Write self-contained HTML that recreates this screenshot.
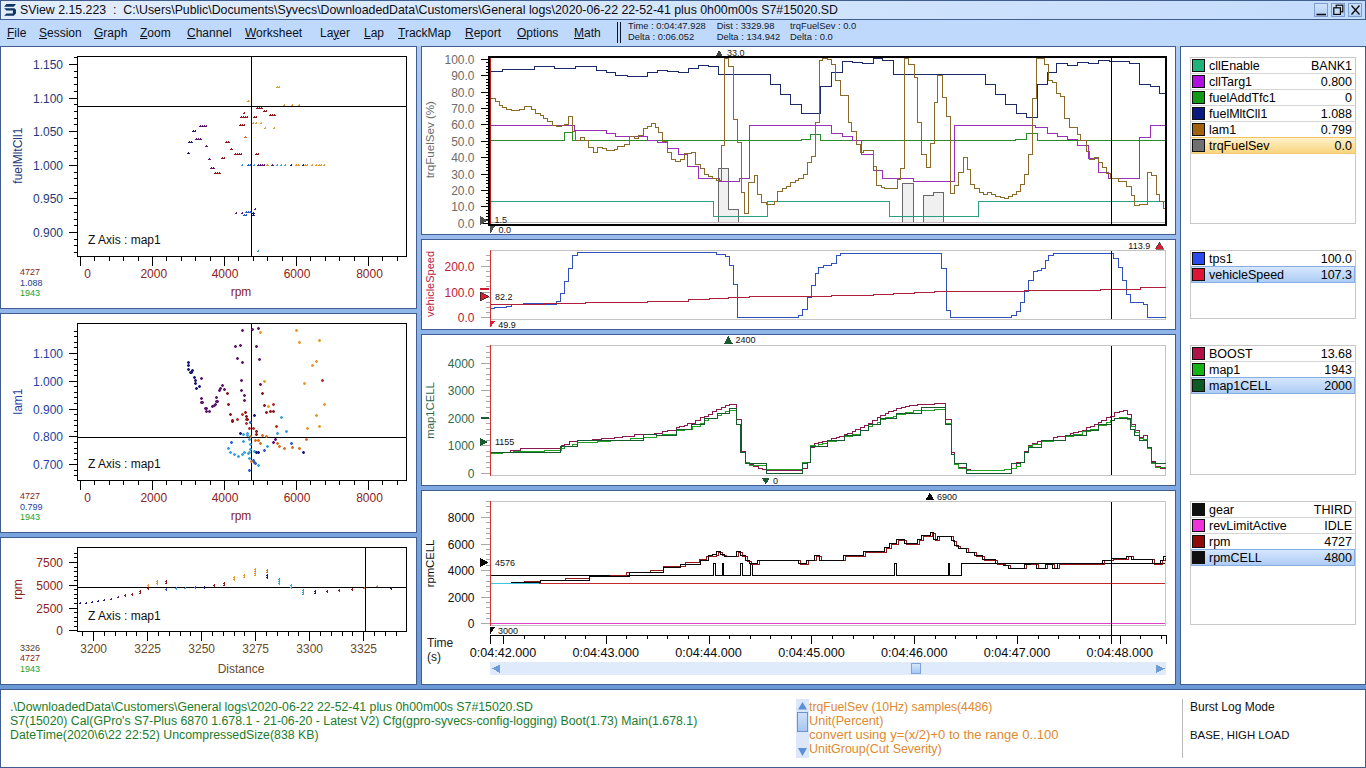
<!DOCTYPE html>
<html><head><meta charset="utf-8">
<style>
*{box-sizing:border-box;margin:0;padding:0}
html,body{width:1366px;height:768px;overflow:hidden}
body{position:relative;font-family:"Liberation Sans",sans-serif;background:linear-gradient(#aecbf2 46px,#8fb4e9 330px,#7fa8e2 490px,#6b97d5 690px);color:#000}
.a{position:absolute;white-space:pre}
.pn{position:absolute;background:#fff;border:1px solid #3f5d8f}
#title{position:absolute;left:0;top:0;width:1366px;height:20px;border:1px solid #3f5d8f;background:linear-gradient(90deg,#e2edfc,#d3e5fd 50%,#c4dcfc)}
#menu{position:absolute;left:0;top:20px;width:1366px;height:26px;background:#bfd9fc}
.mi{position:absolute;top:26px;font-size:12px;color:#0b1120;line-height:14px}
.mi u{text-decoration:underline;text-decoration-thickness:1px;text-underline-offset:0.5px}
.wb{position:absolute;top:3px;width:14px;height:14px;border:1px solid #7d9dcf;background:linear-gradient(#cfe1fa,#b0cff8)}
svg.ov{position:absolute;left:0;top:0}
svg text{font-family:"Liberation Sans",sans-serif}
.lg{position:absolute;left:1190px;width:166px;border:1px solid #c8c8c8;background:#fff}
.row{position:relative;height:16px;border-bottom:1px solid #d4d4d4;font-size:12.5px;line-height:15px;white-space:nowrap}
.row .sw{position:absolute;left:1px;top:1px;width:13px;height:13px;border:1px solid #101010}
.row .n{position:absolute;left:18px;top:1px}
.row .v{position:absolute;right:3px;top:1px}
.row.hy{background:linear-gradient(#fff2cc,#f9d47c);border-bottom-color:#f0c878;box-shadow:0 -1px 0 #f0c468}
.row.hb{background:linear-gradient(#d6e7fd,#adccf5);border-bottom-color:#86ace2;box-shadow:0 -1px 0 #86ace2,inset 1px 0 0 #86ace2,inset -1px 0 0 #86ace2}
.st{position:absolute;font-size:12.3px;white-space:pre;line-height:14px}
</style></head><body>

<div id="title"></div><div id="menu"></div>
<svg class="ov" width="20" height="20"><path d="M4.1 6.73L6.44 4.1H15.96L13.76 6.73Z M4.1 8.2H14.4L15.96 9.8V13.5L13.76 15.81H4.1L6.44 13.47H12.88V10.54H6.44Z" fill="#0f3566"/></svg>
<div class="a" style="left:20px;top:3px;font-size:12.33px;line-height:15px;color:#0c0c14">SView 2.15.223  :  C:\Users\Public\Documents\Syvecs\DownloadedData\Customers\General logs\2020-06-22 22-52-41 plus 0h00m00s S7#15020.SD</div>
<div class="wb" style="left:1314px"></div>
<div class="wb" style="left:1331px"></div>
<div class="wb" style="left:1348px"></div>
<svg class="ov" width="1366" height="20" style="top:0"><path d="M1316.5 14.5H1326" stroke="#0a0a0a" stroke-width="1.6"/><rect x="1336.2" y="5.2" width="6.6" height="6.6" fill="none" stroke="#0a0a0a" stroke-width="1.2"/><rect x="1333.8" y="7.8" width="6.6" height="6.6" fill="#c4dbf9" stroke="#0a0a0a" stroke-width="1.2"/><path d="M1351.5 5.5L1359.5 14.5M1359.5 5.5L1351.5 14.5" stroke="#0a0a0a" stroke-width="1.3"/></svg>
<div class="mi" style="left:7px"><u>F</u>ile</div>
<div class="mi" style="left:39px"><u>S</u>ession</div>
<div class="mi" style="left:94px"><u>G</u>raph</div>
<div class="mi" style="left:140px"><u>Z</u>oom</div>
<div class="mi" style="left:187px"><u>C</u>hannel</div>
<div class="mi" style="left:245px"><u>W</u>orksheet</div>
<div class="mi" style="left:320px">La<u>y</u>er</div>
<div class="mi" style="left:364px"><u>L</u>ap</div>
<div class="mi" style="left:398px"><u>T</u>rackMap</div>
<div class="mi" style="left:465px"><u>R</u>eport</div>
<div class="mi" style="left:517px"><u>O</u>ptions</div>
<div class="mi" style="left:574px"><u>M</u>ath</div>
<svg class="ov" width="1366" height="46"><path d="M617.5 22V43M620.5 22V43" stroke="#101828" stroke-width="1"/><text x="628" y="29" font-size="9.4" fill="#141a2a" text-anchor="start">Time : 0:04:47.928</text><text x="628" y="39.5" font-size="9.4" fill="#141a2a" text-anchor="start">Delta : 0:06.052</text><text x="716.7" y="29" font-size="9.4" fill="#141a2a" text-anchor="start">Dist : 3329.98</text><text x="716.7" y="39.5" font-size="9.4" fill="#141a2a" text-anchor="start">Delta : 134.942</text><text x="790" y="29" font-size="9.4" fill="#141a2a" text-anchor="start">trqFuelSev : 0.0</text><text x="790" y="39.5" font-size="9.4" fill="#141a2a" text-anchor="start">Delta : 0.0</text></svg>
<div class="pn" style="left:0px;top:46px;width:417px;height:263px"></div>
<div class="pn" style="left:0px;top:313px;width:417px;height:220px"></div>
<div class="pn" style="left:0px;top:537px;width:417px;height:148px"></div>
<div class="pn" style="left:421px;top:46px;width:755px;height:189px"></div>
<div class="pn" style="left:421px;top:239px;width:755px;height:91px"></div>
<div class="pn" style="left:421px;top:334px;width:755px;height:152px"></div>
<div class="pn" style="left:421px;top:490px;width:755px;height:195px"></div>
<div class="pn" style="left:1180px;top:46px;width:186px;height:639px"></div>
<div class="pn" style="left:0px;top:689px;width:1366px;height:79px"></div>
<svg class="ov" width="1366" height="768" shape-rendering="crispEdges"><rect x="77.5" y="56.5" width="329" height="200" fill="none" stroke="#000"/><path d="M74 57.5H77" stroke="#000"/><path d="M74 71.5H77" stroke="#000"/><path d="M74 77.5H77" stroke="#000"/><path d="M74 84.5H77" stroke="#000"/><path d="M74 91.5H77" stroke="#000"/><path d="M74 104.5H77" stroke="#000"/><path d="M74 111.5H77" stroke="#000"/><path d="M74 118.5H77" stroke="#000"/><path d="M74 124.5H77" stroke="#000"/><path d="M74 138.5H77" stroke="#000"/><path d="M74 145.5H77" stroke="#000"/><path d="M74 151.5H77" stroke="#000"/><path d="M74 158.5H77" stroke="#000"/><path d="M74 172.5H77" stroke="#000"/><path d="M74 178.5H77" stroke="#000"/><path d="M74 185.5H77" stroke="#000"/><path d="M74 192.5H77" stroke="#000"/><path d="M74 205.5H77" stroke="#000"/><path d="M74 212.5H77" stroke="#000"/><path d="M74 219.5H77" stroke="#000"/><path d="M74 225.5H77" stroke="#000"/><path d="M74 239.5H77" stroke="#000"/><path d="M74 245.5H77" stroke="#000"/><path d="M74 252.5H77" stroke="#000"/><path d="M69 64.5H77" stroke="#000"/><path d="M69 98.5H77" stroke="#000"/><path d="M69 131.5H77" stroke="#000"/><path d="M69 165.5H77" stroke="#000"/><path d="M69 198.5H77" stroke="#000"/><path d="M69 232.5H77" stroke="#000"/><text x="63" y="68.5" font-size="12" fill="#243a78" text-anchor="end">1.150</text><text x="63" y="102.5" font-size="12" fill="#243a78" text-anchor="end">1.100</text><text x="63" y="135.5" font-size="12" fill="#243a78" text-anchor="end">1.050</text><text x="63" y="169.5" font-size="12" fill="#243a78" text-anchor="end">1.000</text><text x="63" y="202.5" font-size="12" fill="#243a78" text-anchor="end">0.950</text><text x="63" y="236.5" font-size="12" fill="#243a78" text-anchor="end">0.900</text><path d="M80.5 257V266" stroke="#000"/><path d="M94.5 257V261" stroke="#000"/><path d="M109.5 257V261" stroke="#000"/><path d="M123.5 257V261" stroke="#000"/><path d="M138.5 257V261" stroke="#000"/><path d="M152.5 257V266" stroke="#000"/><path d="M166.5 257V261" stroke="#000"/><path d="M181.5 257V261" stroke="#000"/><path d="M195.5 257V261" stroke="#000"/><path d="M210.5 257V261" stroke="#000"/><path d="M224.5 257V266" stroke="#000"/><path d="M238.5 257V261" stroke="#000"/><path d="M253.5 257V261" stroke="#000"/><path d="M267.5 257V261" stroke="#000"/><path d="M282.5 257V261" stroke="#000"/><path d="M296.5 257V266" stroke="#000"/><path d="M310.5 257V261" stroke="#000"/><path d="M325.5 257V261" stroke="#000"/><path d="M339.5 257V261" stroke="#000"/><path d="M354.5 257V261" stroke="#000"/><path d="M368.5 257V266" stroke="#000"/><path d="M382.5 257V261" stroke="#000"/><path d="M397.5 257V261" stroke="#000"/><text x="87.5" y="277.5" font-size="12" fill="#8b2222" text-anchor="middle">0</text><text x="153.8" y="277.5" font-size="12" fill="#8b2222" text-anchor="middle">2000</text><text x="225" y="277.5" font-size="12" fill="#8b2222" text-anchor="middle">4000</text><text x="297" y="277.5" font-size="12" fill="#8b2222" text-anchor="middle">6000</text><text x="369.5" y="277.5" font-size="12" fill="#8b2222" text-anchor="middle">8000</text><text x="241" y="296" font-size="12" fill="#8b2222" text-anchor="middle">rpm</text><text transform="translate(22,79) rotate(-90)" font-size="12" fill="#243a78" text-anchor="middle"></text><text transform="translate(22,155.7) rotate(-90)" font-size="12" fill="#243a78" text-anchor="middle">fuelMltCll1</text><text x="88" y="244" font-size="12" fill="#101010" text-anchor="start">Z Axis : map1</text><text x="20" y="275" font-size="9" fill="#8b1c1c" text-anchor="start">4727</text><text x="20" y="285.5" font-size="9" fill="#243a8c" text-anchor="start">1.088</text><text x="20" y="296" font-size="9" fill="#22a030" text-anchor="start">1943</text><path d="M251.5 57V256M78 106.5H406" stroke="#000" stroke-width="1"/><rect x="276" y="87" width="4" height="1" fill="#e99a2c"/><rect x="277" y="86" width="1" height="1" fill="#e99a2c"/><rect x="279" y="86" width="1" height="1" fill="#e99a2c"/><rect x="247" y="101" width="3" height="1" fill="#e99a2c"/><rect x="248" y="100" width="1" height="1" fill="#e99a2c"/><rect x="283" y="105" width="2" height="1" fill="#e99a2c"/><rect x="284" y="104" width="1" height="1" fill="#e99a2c"/><rect x="291" y="105" width="2" height="1" fill="#e99a2c"/><rect x="292" y="104" width="1" height="1" fill="#e99a2c"/><rect x="298" y="105" width="2" height="1" fill="#e99a2c"/><rect x="299" y="104" width="1" height="1" fill="#e99a2c"/><rect x="256" y="108" width="7" height="1" fill="#8c1c1c"/><rect x="257" y="107" width="1" height="1" fill="#8c1c1c"/><rect x="259" y="107" width="1" height="1" fill="#8c1c1c"/><rect x="261" y="107" width="1" height="1" fill="#8c1c1c"/><rect x="263" y="111" width="4" height="1" fill="#8c1c1c"/><rect x="264" y="110" width="1" height="1" fill="#8c1c1c"/><rect x="266" y="110" width="1" height="1" fill="#8c1c1c"/><rect x="269" y="115" width="7" height="1" fill="#8c1c1c"/><rect x="270" y="114" width="1" height="1" fill="#8c1c1c"/><rect x="272" y="114" width="1" height="1" fill="#8c1c1c"/><rect x="274" y="114" width="1" height="1" fill="#8c1c1c"/><rect x="243" y="113" width="2" height="1" fill="#8c1c1c"/><rect x="244" y="112" width="1" height="1" fill="#8c1c1c"/><rect x="240" y="117" width="8" height="1" fill="#8c1c1c"/><rect x="241" y="116" width="1" height="1" fill="#8c1c1c"/><rect x="243" y="116" width="1" height="1" fill="#8c1c1c"/><rect x="245" y="116" width="1" height="1" fill="#8c1c1c"/><rect x="247" y="116" width="1" height="1" fill="#8c1c1c"/><rect x="253" y="117" width="4" height="1" fill="#8c1c1c"/><rect x="254" y="116" width="1" height="1" fill="#8c1c1c"/><rect x="256" y="116" width="1" height="1" fill="#8c1c1c"/><rect x="252" y="123" width="2" height="1" fill="#e99a2c"/><rect x="253" y="122" width="1" height="1" fill="#e99a2c"/><rect x="255" y="123" width="2" height="1" fill="#e99a2c"/><rect x="256" y="122" width="1" height="1" fill="#e99a2c"/><rect x="260" y="123" width="2" height="1" fill="#e99a2c"/><rect x="261" y="122" width="1" height="1" fill="#e99a2c"/><rect x="264" y="128" width="2" height="1" fill="#e99a2c"/><rect x="265" y="127" width="1" height="1" fill="#e99a2c"/><rect x="273" y="128" width="2" height="1" fill="#e99a2c"/><rect x="274" y="127" width="1" height="1" fill="#e99a2c"/><rect x="239" y="125" width="6" height="1" fill="#8c1c1c"/><rect x="240" y="124" width="1" height="1" fill="#8c1c1c"/><rect x="242" y="124" width="1" height="1" fill="#8c1c1c"/><rect x="244" y="124" width="1" height="1" fill="#8c1c1c"/><rect x="199" y="126" width="8" height="1" fill="#5e1870"/><rect x="200" y="125" width="1" height="1" fill="#5e1870"/><rect x="202" y="125" width="1" height="1" fill="#5e1870"/><rect x="204" y="125" width="1" height="1" fill="#5e1870"/><rect x="206" y="125" width="1" height="1" fill="#5e1870"/><rect x="192" y="131" width="4" height="1" fill="#1c1c78"/><rect x="193" y="130" width="1" height="1" fill="#1c1c78"/><rect x="195" y="130" width="1" height="1" fill="#1c1c78"/><rect x="195" y="139" width="7" height="1" fill="#5e1870"/><rect x="196" y="138" width="1" height="1" fill="#5e1870"/><rect x="198" y="138" width="1" height="1" fill="#5e1870"/><rect x="200" y="138" width="1" height="1" fill="#5e1870"/><rect x="244" y="137" width="3" height="1" fill="#d8702a"/><rect x="245" y="136" width="1" height="1" fill="#d8702a"/><rect x="188" y="142" width="5" height="1" fill="#1c1c78"/><rect x="189" y="141" width="1" height="1" fill="#1c1c78"/><rect x="191" y="141" width="1" height="1" fill="#1c1c78"/><rect x="225" y="142" width="5" height="1" fill="#8c1c1c"/><rect x="226" y="141" width="1" height="1" fill="#8c1c1c"/><rect x="228" y="141" width="1" height="1" fill="#8c1c1c"/><rect x="205" y="146" width="3" height="1" fill="#5e1870"/><rect x="206" y="145" width="1" height="1" fill="#5e1870"/><rect x="230" y="149" width="3" height="1" fill="#8c1c1c"/><rect x="231" y="148" width="1" height="1" fill="#8c1c1c"/><rect x="187" y="153" width="3" height="1" fill="#1c1c78"/><rect x="188" y="152" width="1" height="1" fill="#1c1c78"/><rect x="234" y="154" width="8" height="1" fill="#8c1c1c"/><rect x="235" y="153" width="1" height="1" fill="#8c1c1c"/><rect x="237" y="153" width="1" height="1" fill="#8c1c1c"/><rect x="239" y="153" width="1" height="1" fill="#8c1c1c"/><rect x="241" y="153" width="1" height="1" fill="#8c1c1c"/><rect x="255" y="154" width="4" height="1" fill="#8c1c1c"/><rect x="256" y="153" width="1" height="1" fill="#8c1c1c"/><rect x="258" y="153" width="1" height="1" fill="#8c1c1c"/><rect x="208" y="159" width="3" height="1" fill="#5e1870"/><rect x="209" y="158" width="1" height="1" fill="#5e1870"/><rect x="221" y="158" width="4" height="1" fill="#8c1c1c"/><rect x="222" y="157" width="1" height="1" fill="#8c1c1c"/><rect x="224" y="157" width="1" height="1" fill="#8c1c1c"/><rect x="241" y="165" width="2" height="1" fill="#3aa6dc"/><rect x="242" y="164" width="1" height="1" fill="#3aa6dc"/><rect x="247" y="165" width="4" height="1" fill="#2a5ccc"/><rect x="248" y="164" width="1" height="1" fill="#2a5ccc"/><rect x="250" y="164" width="1" height="1" fill="#2a5ccc"/><rect x="253" y="165" width="2" height="1" fill="#3aa6dc"/><rect x="254" y="164" width="1" height="1" fill="#3aa6dc"/><rect x="257" y="165" width="8" height="1" fill="#5e1870"/><rect x="258" y="164" width="1" height="1" fill="#5e1870"/><rect x="260" y="164" width="1" height="1" fill="#5e1870"/><rect x="262" y="164" width="1" height="1" fill="#5e1870"/><rect x="264" y="164" width="1" height="1" fill="#5e1870"/><rect x="266" y="165" width="3" height="1" fill="#e99a2c"/><rect x="267" y="164" width="1" height="1" fill="#e99a2c"/><rect x="271" y="165" width="3" height="1" fill="#5e1870"/><rect x="272" y="164" width="1" height="1" fill="#5e1870"/><rect x="276" y="165" width="2" height="1" fill="#3aa6dc"/><rect x="277" y="164" width="1" height="1" fill="#3aa6dc"/><rect x="280" y="165" width="2" height="1" fill="#3aa6dc"/><rect x="281" y="164" width="1" height="1" fill="#3aa6dc"/><rect x="284" y="165" width="2" height="1" fill="#3aa6dc"/><rect x="285" y="164" width="1" height="1" fill="#3aa6dc"/><rect x="290" y="165" width="2" height="1" fill="#1c1c78"/><rect x="291" y="164" width="1" height="1" fill="#1c1c78"/><rect x="295" y="165" width="5" height="1" fill="#e99a2c"/><rect x="296" y="164" width="1" height="1" fill="#e99a2c"/><rect x="298" y="164" width="1" height="1" fill="#e99a2c"/><rect x="302" y="165" width="2" height="1" fill="#1c1c78"/><rect x="303" y="164" width="1" height="1" fill="#1c1c78"/><rect x="304" y="165" width="4" height="1" fill="#e99a2c"/><rect x="305" y="164" width="1" height="1" fill="#e99a2c"/><rect x="307" y="164" width="1" height="1" fill="#e99a2c"/><rect x="311" y="165" width="2" height="1" fill="#e99a2c"/><rect x="312" y="164" width="1" height="1" fill="#e99a2c"/><rect x="315" y="165" width="2" height="1" fill="#e99a2c"/><rect x="316" y="164" width="1" height="1" fill="#e99a2c"/><rect x="318" y="165" width="4" height="1" fill="#e99a2c"/><rect x="319" y="164" width="1" height="1" fill="#e99a2c"/><rect x="321" y="164" width="1" height="1" fill="#e99a2c"/><rect x="323" y="165" width="2" height="1" fill="#e99a2c"/><rect x="324" y="164" width="1" height="1" fill="#e99a2c"/><rect x="210" y="168" width="5" height="1" fill="#5e1870"/><rect x="211" y="167" width="1" height="1" fill="#5e1870"/><rect x="213" y="167" width="1" height="1" fill="#5e1870"/><rect x="214" y="173" width="7" height="1" fill="#8c1c1c"/><rect x="215" y="172" width="1" height="1" fill="#8c1c1c"/><rect x="217" y="172" width="1" height="1" fill="#8c1c1c"/><rect x="219" y="172" width="1" height="1" fill="#8c1c1c"/><rect x="254" y="209" width="2" height="1" fill="#5e1870"/><rect x="255" y="208" width="1" height="1" fill="#5e1870"/><rect x="235" y="213" width="2" height="1" fill="#5e1870"/><rect x="236" y="212" width="1" height="1" fill="#5e1870"/><rect x="241" y="213" width="2" height="1" fill="#5e1870"/><rect x="242" y="212" width="1" height="1" fill="#5e1870"/><rect x="245" y="212" width="7" height="1" fill="#2a5ccc"/><rect x="246" y="211" width="1" height="1" fill="#2a5ccc"/><rect x="248" y="211" width="1" height="1" fill="#2a5ccc"/><rect x="250" y="211" width="1" height="1" fill="#2a5ccc"/><rect x="252" y="213" width="3" height="1" fill="#1c1c78"/><rect x="253" y="212" width="1" height="1" fill="#1c1c78"/><rect x="243" y="215" width="4" height="1" fill="#2a5ccc"/><rect x="244" y="214" width="1" height="1" fill="#2a5ccc"/><rect x="246" y="214" width="1" height="1" fill="#2a5ccc"/><rect x="252" y="215" width="3" height="1" fill="#1c1c78"/><rect x="253" y="214" width="1" height="1" fill="#1c1c78"/><rect x="257" y="251" width="2" height="1" fill="#3aa6dc"/><rect x="258" y="250" width="1" height="1" fill="#3aa6dc"/><rect x="77.5" y="323.5" width="329" height="157" fill="none" stroke="#000"/><path d="M74 331.5H77" stroke="#000"/><path d="M74 336.5H77" stroke="#000"/><path d="M74 342.5H77" stroke="#000"/><path d="M74 347.5H77" stroke="#000"/><path d="M74 359.5H77" stroke="#000"/><path d="M74 364.5H77" stroke="#000"/><path d="M74 370.5H77" stroke="#000"/><path d="M74 375.5H77" stroke="#000"/><path d="M74 386.5H77" stroke="#000"/><path d="M74 392.5H77" stroke="#000"/><path d="M74 397.5H77" stroke="#000"/><path d="M74 403.5H77" stroke="#000"/><path d="M74 414.5H77" stroke="#000"/><path d="M74 420.5H77" stroke="#000"/><path d="M74 425.5H77" stroke="#000"/><path d="M74 431.5H77" stroke="#000"/><path d="M74 442.5H77" stroke="#000"/><path d="M74 448.5H77" stroke="#000"/><path d="M74 453.5H77" stroke="#000"/><path d="M74 459.5H77" stroke="#000"/><path d="M74 470.5H77" stroke="#000"/><path d="M74 475.5H77" stroke="#000"/><path d="M69 353.5H77" stroke="#000"/><path d="M69 381.5H77" stroke="#000"/><path d="M69 409.5H77" stroke="#000"/><path d="M69 436.5H77" stroke="#000"/><path d="M69 464.5H77" stroke="#000"/><text x="63" y="357.5" font-size="12" fill="#2242a6" text-anchor="end">1.100</text><text x="63" y="385.5" font-size="12" fill="#2242a6" text-anchor="end">1.000</text><text x="63" y="413.5" font-size="12" fill="#2242a6" text-anchor="end">0.900</text><text x="63" y="440.5" font-size="12" fill="#2242a6" text-anchor="end">0.800</text><text x="63" y="468.5" font-size="12" fill="#2242a6" text-anchor="end">0.700</text><path d="M80.5 481V490" stroke="#000"/><path d="M94.5 481V485" stroke="#000"/><path d="M109.5 481V485" stroke="#000"/><path d="M123.5 481V485" stroke="#000"/><path d="M138.5 481V485" stroke="#000"/><path d="M152.5 481V490" stroke="#000"/><path d="M166.5 481V485" stroke="#000"/><path d="M181.5 481V485" stroke="#000"/><path d="M195.5 481V485" stroke="#000"/><path d="M210.5 481V485" stroke="#000"/><path d="M224.5 481V490" stroke="#000"/><path d="M238.5 481V485" stroke="#000"/><path d="M253.5 481V485" stroke="#000"/><path d="M267.5 481V485" stroke="#000"/><path d="M282.5 481V485" stroke="#000"/><path d="M296.5 481V490" stroke="#000"/><path d="M310.5 481V485" stroke="#000"/><path d="M325.5 481V485" stroke="#000"/><path d="M339.5 481V485" stroke="#000"/><path d="M354.5 481V485" stroke="#000"/><path d="M368.5 481V490" stroke="#000"/><path d="M382.5 481V485" stroke="#000"/><path d="M397.5 481V485" stroke="#000"/><text x="87.5" y="501.5" font-size="12" fill="#8b2222" text-anchor="middle">0</text><text x="153.8" y="501.5" font-size="12" fill="#8b2222" text-anchor="middle">2000</text><text x="225" y="501.5" font-size="12" fill="#8b2222" text-anchor="middle">4000</text><text x="297" y="501.5" font-size="12" fill="#8b2222" text-anchor="middle">6000</text><text x="369.5" y="501.5" font-size="12" fill="#8b2222" text-anchor="middle">8000</text><text x="241" y="520" font-size="12" fill="#8b2222" text-anchor="middle">rpm</text><text transform="translate(22,401.5) rotate(-90)" font-size="12" fill="#2242a6" text-anchor="middle">lam1</text><text x="88" y="468" font-size="12" fill="#101010" text-anchor="start">Z Axis : map1</text><text x="20" y="498.6" font-size="9" fill="#8b1c1c" text-anchor="start">4727</text><text x="20" y="509.6" font-size="9" fill="#2242a6" text-anchor="start">0.799</text><text x="20" y="520.4" font-size="9" fill="#22a030" text-anchor="start">1943</text><path d="M251.5 324V480M78 437.5H406" stroke="#000"/><path d="M241 330h3v1h-3zM242 329h1v3h-1z" fill="#5e1870"/><path d="M241 329h3v3h-3z" fill="#5e1870" fill-opacity="0.4"/><path d="M251 329h3v1h-3zM252 328h1v3h-1z" fill="#5e1870"/><path d="M251 328h3v3h-3z" fill="#5e1870" fill-opacity="0.4"/><path d="M257 328h3v1h-3zM258 327h1v3h-1z" fill="#5e1870"/><path d="M257 327h3v3h-3z" fill="#5e1870" fill-opacity="0.4"/><path d="M259 332h3v1h-3zM260 331h1v3h-1z" fill="#e99a2c"/><path d="M259 331h3v3h-3z" fill="#e99a2c" fill-opacity="0.4"/><path d="M295 330h3v1h-3zM296 329h1v3h-1z" fill="#e99a2c"/><path d="M295 329h3v3h-3z" fill="#e99a2c" fill-opacity="0.4"/><path d="M234 346h3v1h-3zM235 345h1v3h-1z" fill="#5e1870"/><path d="M234 345h3v3h-3z" fill="#5e1870" fill-opacity="0.4"/><path d="M239 345h3v1h-3zM240 344h1v3h-1z" fill="#5e1870"/><path d="M239 344h3v3h-3z" fill="#5e1870" fill-opacity="0.4"/><path d="M255 346h3v1h-3zM256 345h1v3h-1z" fill="#5e1870"/><path d="M255 345h3v3h-3z" fill="#5e1870" fill-opacity="0.4"/><path d="M298 342h3v1h-3zM299 341h1v3h-1z" fill="#e99a2c"/><path d="M298 341h3v3h-3z" fill="#e99a2c" fill-opacity="0.4"/><path d="M318 340h3v1h-3zM319 339h1v3h-1z" fill="#e99a2c"/><path d="M318 339h3v3h-3z" fill="#e99a2c" fill-opacity="0.4"/><path d="M236 358h3v1h-3zM237 357h1v3h-1z" fill="#5e1870"/><path d="M236 357h3v3h-3z" fill="#5e1870" fill-opacity="0.4"/><path d="M241 362h3v1h-3zM242 361h1v3h-1z" fill="#5e1870"/><path d="M241 361h3v3h-3z" fill="#5e1870" fill-opacity="0.4"/><path d="M258 359h3v1h-3zM259 358h1v3h-1z" fill="#5e1870"/><path d="M258 358h3v3h-3z" fill="#5e1870" fill-opacity="0.4"/><path d="M315 361h3v1h-3zM316 360h1v3h-1z" fill="#e99a2c"/><path d="M315 360h3v3h-3z" fill="#e99a2c" fill-opacity="0.4"/><path d="M311 365h3v1h-3zM312 364h1v3h-1z" fill="#e99a2c"/><path d="M311 364h3v3h-3z" fill="#e99a2c" fill-opacity="0.4"/><path d="M187 362h3v1h-3zM188 361h1v3h-1z" fill="#1c1c78"/><path d="M187 361h3v3h-3z" fill="#1c1c78" fill-opacity="0.4"/><path d="M187 365h3v1h-3zM188 364h1v3h-1z" fill="#1c1c78"/><path d="M187 364h3v3h-3z" fill="#1c1c78" fill-opacity="0.4"/><path d="M187 369h3v1h-3zM188 368h1v3h-1z" fill="#1c1c78"/><path d="M187 368h3v3h-3z" fill="#1c1c78" fill-opacity="0.4"/><path d="M190 372h3v1h-3zM191 371h1v3h-1z" fill="#1c1c78"/><path d="M190 371h3v3h-3z" fill="#1c1c78" fill-opacity="0.4"/><path d="M191 370h3v1h-3zM192 369h1v3h-1z" fill="#1c1c78"/><path d="M191 369h3v3h-3z" fill="#1c1c78" fill-opacity="0.4"/><path d="M189 372h3v1h-3zM190 371h1v3h-1z" fill="#1c1c78"/><path d="M189 371h3v3h-3z" fill="#1c1c78" fill-opacity="0.4"/><path d="M193 377h3v1h-3zM194 376h1v3h-1z" fill="#1c1c78"/><path d="M193 376h3v3h-3z" fill="#1c1c78" fill-opacity="0.4"/><path d="M194 380h3v1h-3zM195 379h1v3h-1z" fill="#1c1c78"/><path d="M194 379h3v3h-3z" fill="#1c1c78" fill-opacity="0.4"/><path d="M194 383h3v1h-3zM195 382h1v3h-1z" fill="#1c1c78"/><path d="M194 382h3v3h-3z" fill="#1c1c78" fill-opacity="0.4"/><path d="M195 388h3v1h-3zM196 387h1v3h-1z" fill="#1c1c78"/><path d="M195 387h3v3h-3z" fill="#1c1c78" fill-opacity="0.4"/><path d="M198 386h3v1h-3zM199 385h1v3h-1z" fill="#1c1c78"/><path d="M198 385h3v3h-3z" fill="#1c1c78" fill-opacity="0.4"/><path d="M200 378h3v1h-3zM201 377h1v3h-1z" fill="#5e1870"/><path d="M200 377h3v3h-3z" fill="#5e1870" fill-opacity="0.4"/><path d="M240 380h3v1h-3zM241 379h1v3h-1z" fill="#5e1870"/><path d="M240 379h3v3h-3z" fill="#5e1870" fill-opacity="0.4"/><path d="M240 390h3v1h-3zM241 389h1v3h-1z" fill="#5e1870"/><path d="M240 389h3v3h-3z" fill="#5e1870" fill-opacity="0.4"/><path d="M243 395h3v1h-3zM244 394h1v3h-1z" fill="#5e1870"/><path d="M243 394h3v3h-3z" fill="#5e1870" fill-opacity="0.4"/><path d="M243 400h3v1h-3zM244 399h1v3h-1z" fill="#5e1870"/><path d="M243 399h3v3h-3z" fill="#5e1870" fill-opacity="0.4"/><path d="M263 381h3v1h-3zM264 380h1v3h-1z" fill="#e99a2c"/><path d="M263 380h3v3h-3z" fill="#e99a2c" fill-opacity="0.4"/><path d="M303 383h3v1h-3zM304 382h1v3h-1z" fill="#e99a2c"/><path d="M303 382h3v3h-3z" fill="#e99a2c" fill-opacity="0.4"/><path d="M321 380h3v1h-3zM322 379h1v3h-1z" fill="#b8302a"/><path d="M321 379h3v3h-3z" fill="#b8302a" fill-opacity="0.4"/><path d="M259 384h3v1h-3zM260 383h1v3h-1z" fill="#5e1870"/><path d="M259 383h3v3h-3z" fill="#5e1870" fill-opacity="0.4"/><path d="M261 393h3v1h-3zM262 392h1v3h-1z" fill="#8c1c1c"/><path d="M261 392h3v3h-3z" fill="#8c1c1c" fill-opacity="0.4"/><path d="M221 385h3v1h-3zM222 384h1v3h-1z" fill="#5e1870"/><path d="M221 384h3v3h-3z" fill="#5e1870" fill-opacity="0.4"/><path d="M219 388h3v1h-3zM220 387h1v3h-1z" fill="#5e1870"/><path d="M219 387h3v3h-3z" fill="#5e1870" fill-opacity="0.4"/><path d="M218 390h3v1h-3zM219 389h1v3h-1z" fill="#5e1870"/><path d="M218 389h3v3h-3z" fill="#5e1870" fill-opacity="0.4"/><path d="M223 389h3v1h-3zM224 388h1v3h-1z" fill="#5e1870"/><path d="M223 388h3v3h-3z" fill="#5e1870" fill-opacity="0.4"/><path d="M226 393h3v1h-3zM227 392h1v3h-1z" fill="#8c1c1c"/><path d="M226 392h3v3h-3z" fill="#8c1c1c" fill-opacity="0.4"/><path d="M200 398h3v1h-3zM201 397h1v3h-1z" fill="#5e1870"/><path d="M200 397h3v3h-3z" fill="#5e1870" fill-opacity="0.4"/><path d="M200 402h3v1h-3zM201 401h1v3h-1z" fill="#5e1870"/><path d="M200 401h3v3h-3z" fill="#5e1870" fill-opacity="0.4"/><path d="M205 408h3v1h-3zM206 407h1v3h-1z" fill="#5e1870"/><path d="M205 407h3v3h-3z" fill="#5e1870" fill-opacity="0.4"/><path d="M215 397h3v1h-3zM216 396h1v3h-1z" fill="#5e1870"/><path d="M215 396h3v3h-3z" fill="#5e1870" fill-opacity="0.4"/><path d="M215 401h3v1h-3zM216 400h1v3h-1z" fill="#5e1870"/><path d="M215 400h3v3h-3z" fill="#5e1870" fill-opacity="0.4"/><path d="M214 404h3v1h-3zM215 403h1v3h-1z" fill="#5e1870"/><path d="M214 403h3v3h-3z" fill="#5e1870" fill-opacity="0.4"/><path d="M211 406h3v1h-3zM212 405h1v3h-1z" fill="#5e1870"/><path d="M211 405h3v3h-3z" fill="#5e1870" fill-opacity="0.4"/><path d="M227 404h3v1h-3zM228 403h1v3h-1z" fill="#8c1c1c"/><path d="M227 403h3v3h-3z" fill="#8c1c1c" fill-opacity="0.4"/><path d="M263 405h3v1h-3zM264 404h1v3h-1z" fill="#8c1c1c"/><path d="M263 404h3v3h-3z" fill="#8c1c1c" fill-opacity="0.4"/><path d="M267 406h3v1h-3zM268 405h1v3h-1z" fill="#e99a2c"/><path d="M267 405h3v3h-3z" fill="#e99a2c" fill-opacity="0.4"/><path d="M272 404h3v1h-3zM273 403h1v3h-1z" fill="#b8302a"/><path d="M272 403h3v3h-3z" fill="#b8302a" fill-opacity="0.4"/><path d="M323 404h3v1h-3zM324 403h1v3h-1z" fill="#e99a2c"/><path d="M323 403h3v3h-3z" fill="#e99a2c" fill-opacity="0.4"/><path d="M201 402h3v1h-3zM202 401h1v3h-1z" fill="#5e1870"/><path d="M201 401h3v3h-3z" fill="#5e1870" fill-opacity="0.4"/><path d="M204 408h3v1h-3zM205 407h1v3h-1z" fill="#5e1870"/><path d="M204 407h3v3h-3z" fill="#5e1870" fill-opacity="0.4"/><path d="M205 411h3v1h-3zM206 410h1v3h-1z" fill="#5e1870"/><path d="M205 410h3v3h-3z" fill="#5e1870" fill-opacity="0.4"/><path d="M208 411h3v1h-3zM209 410h1v3h-1z" fill="#5e1870"/><path d="M208 410h3v3h-3z" fill="#5e1870" fill-opacity="0.4"/><path d="M213 405h3v1h-3zM214 404h1v3h-1z" fill="#5e1870"/><path d="M213 404h3v3h-3z" fill="#5e1870" fill-opacity="0.4"/><path d="M216 401h3v1h-3zM217 400h1v3h-1z" fill="#5e1870"/><path d="M216 400h3v3h-3z" fill="#5e1870" fill-opacity="0.4"/><path d="M229 414h3v1h-3zM230 413h1v3h-1z" fill="#8c1c1c"/><path d="M229 413h3v3h-3z" fill="#8c1c1c" fill-opacity="0.4"/><path d="M231 420h3v1h-3zM232 419h1v3h-1z" fill="#8c1c1c"/><path d="M231 419h3v3h-3z" fill="#8c1c1c" fill-opacity="0.4"/><path d="M231 421h3v1h-3zM232 420h1v3h-1z" fill="#8c1c1c"/><path d="M231 420h3v3h-3z" fill="#8c1c1c" fill-opacity="0.4"/><path d="M236 419h3v1h-3zM237 418h1v3h-1z" fill="#b8302a"/><path d="M236 418h3v3h-3z" fill="#b8302a" fill-opacity="0.4"/><path d="M241 414h3v1h-3zM242 413h1v3h-1z" fill="#b8302a"/><path d="M241 413h3v3h-3z" fill="#b8302a" fill-opacity="0.4"/><path d="M244 412h3v1h-3zM245 411h1v3h-1z" fill="#8c1c1c"/><path d="M244 411h3v3h-3z" fill="#8c1c1c" fill-opacity="0.4"/><path d="M245 416h3v1h-3zM246 415h1v3h-1z" fill="#8c1c1c"/><path d="M245 415h3v3h-3z" fill="#8c1c1c" fill-opacity="0.4"/><path d="M245 419h3v1h-3zM246 418h1v3h-1z" fill="#b8302a"/><path d="M245 418h3v3h-3z" fill="#b8302a" fill-opacity="0.4"/><path d="M246 419h3v1h-3zM247 418h1v3h-1z" fill="#8c1c1c"/><path d="M246 418h3v3h-3z" fill="#8c1c1c" fill-opacity="0.4"/><path d="M245 423h3v1h-3zM246 422h1v3h-1z" fill="#b8302a"/><path d="M245 422h3v3h-3z" fill="#b8302a" fill-opacity="0.4"/><path d="M248 428h3v1h-3zM249 427h1v3h-1z" fill="#b8302a"/><path d="M248 427h3v3h-3z" fill="#b8302a" fill-opacity="0.4"/><path d="M252 428h3v1h-3zM253 427h1v3h-1z" fill="#b8302a"/><path d="M252 427h3v3h-3z" fill="#b8302a" fill-opacity="0.4"/><path d="M265 412h3v1h-3zM266 411h1v3h-1z" fill="#8c1c1c"/><path d="M265 411h3v3h-3z" fill="#8c1c1c" fill-opacity="0.4"/><path d="M269 411h3v1h-3zM270 410h1v3h-1z" fill="#8c1c1c"/><path d="M269 410h3v3h-3z" fill="#8c1c1c" fill-opacity="0.4"/><path d="M272 411h3v1h-3zM273 410h1v3h-1z" fill="#8c1c1c"/><path d="M272 410h3v3h-3z" fill="#8c1c1c" fill-opacity="0.4"/><path d="M253 415h3v1h-3zM254 414h1v3h-1z" fill="#1c1c78"/><path d="M253 414h3v3h-3z" fill="#1c1c78" fill-opacity="0.4"/><path d="M249 422h3v1h-3zM250 421h1v3h-1z" fill="#2a5ccc"/><path d="M249 421h3v3h-3z" fill="#2a5ccc" fill-opacity="0.4"/><path d="M280 417h3v1h-3zM281 416h1v3h-1z" fill="#3aa6dc"/><path d="M280 416h3v3h-3z" fill="#3aa6dc" fill-opacity="0.4"/><path d="M285 431h3v1h-3zM286 430h1v3h-1z" fill="#3aa6dc"/><path d="M285 430h3v3h-3z" fill="#3aa6dc" fill-opacity="0.4"/><path d="M276 433h3v1h-3zM277 432h1v3h-1z" fill="#3aa6dc"/><path d="M276 432h3v3h-3z" fill="#3aa6dc" fill-opacity="0.4"/><path d="M315 415h3v1h-3zM316 414h1v3h-1z" fill="#e99a2c"/><path d="M315 414h3v3h-3z" fill="#e99a2c" fill-opacity="0.4"/><path d="M318 426h3v1h-3zM319 425h1v3h-1z" fill="#e99a2c"/><path d="M318 425h3v3h-3z" fill="#e99a2c" fill-opacity="0.4"/><path d="M306 428h3v1h-3zM307 427h1v3h-1z" fill="#e99a2c"/><path d="M306 427h3v3h-3z" fill="#e99a2c" fill-opacity="0.4"/><path d="M305 439h3v1h-3zM306 438h1v3h-1z" fill="#d8702a"/><path d="M305 438h3v3h-3z" fill="#d8702a" fill-opacity="0.4"/><path d="M275 426h3v1h-3zM276 425h1v3h-1z" fill="#b8302a"/><path d="M275 425h3v3h-3z" fill="#b8302a" fill-opacity="0.4"/><path d="M255 431h3v1h-3zM256 430h1v3h-1z" fill="#8c1c1c"/><path d="M255 430h3v3h-3z" fill="#8c1c1c" fill-opacity="0.4"/><path d="M255 434h3v1h-3zM256 433h1v3h-1z" fill="#8c1c1c"/><path d="M255 433h3v3h-3z" fill="#8c1c1c" fill-opacity="0.4"/><path d="M261 435h3v1h-3zM262 434h1v3h-1z" fill="#d8702a"/><path d="M261 434h3v3h-3z" fill="#d8702a" fill-opacity="0.4"/><path d="M265 436h3v1h-3zM266 435h1v3h-1z" fill="#d8702a"/><path d="M265 435h3v3h-3z" fill="#d8702a" fill-opacity="0.4"/><path d="M249 436h3v1h-3zM250 435h1v3h-1z" fill="#d8702a"/><path d="M249 435h3v3h-3z" fill="#d8702a" fill-opacity="0.4"/><path d="M239 433h3v1h-3zM240 432h1v3h-1z" fill="#1c1c78"/><path d="M239 432h3v3h-3z" fill="#1c1c78" fill-opacity="0.4"/><path d="M242 434h3v1h-3zM243 433h1v3h-1z" fill="#3aa6dc"/><path d="M242 433h3v3h-3z" fill="#3aa6dc" fill-opacity="0.4"/><path d="M246 433h3v1h-3zM247 432h1v3h-1z" fill="#3aa6dc"/><path d="M246 432h3v3h-3z" fill="#3aa6dc" fill-opacity="0.4"/><path d="M246 435h3v1h-3zM247 434h1v3h-1z" fill="#3aa6dc"/><path d="M246 434h3v3h-3z" fill="#3aa6dc" fill-opacity="0.4"/><path d="M254 440h3v1h-3zM255 439h1v3h-1z" fill="#d8702a"/><path d="M254 439h3v3h-3z" fill="#d8702a" fill-opacity="0.4"/><path d="M257 440h3v1h-3zM258 439h1v3h-1z" fill="#d8702a"/><path d="M257 439h3v3h-3z" fill="#d8702a" fill-opacity="0.4"/><path d="M259 443h3v1h-3zM260 442h1v3h-1z" fill="#d8702a"/><path d="M259 442h3v3h-3z" fill="#d8702a" fill-opacity="0.4"/><path d="M274 439h3v1h-3zM275 438h1v3h-1z" fill="#5e1870"/><path d="M274 438h3v3h-3z" fill="#5e1870" fill-opacity="0.4"/><path d="M272 442h3v1h-3zM273 441h1v3h-1z" fill="#5e1870"/><path d="M272 441h3v3h-3z" fill="#5e1870" fill-opacity="0.4"/><path d="M276 443h3v1h-3zM277 442h1v3h-1z" fill="#d8702a"/><path d="M276 442h3v3h-3z" fill="#d8702a" fill-opacity="0.4"/><path d="M278 446h3v1h-3zM279 445h1v3h-1z" fill="#d8702a"/><path d="M278 445h3v3h-3z" fill="#d8702a" fill-opacity="0.4"/><path d="M283 448h3v1h-3zM284 447h1v3h-1z" fill="#d8702a"/><path d="M283 447h3v3h-3z" fill="#d8702a" fill-opacity="0.4"/><path d="M291 447h3v1h-3zM292 446h1v3h-1z" fill="#d8702a"/><path d="M291 446h3v3h-3z" fill="#d8702a" fill-opacity="0.4"/><path d="M298 448h3v1h-3zM299 447h1v3h-1z" fill="#d8702a"/><path d="M298 447h3v3h-3z" fill="#d8702a" fill-opacity="0.4"/><path d="M290 443h3v1h-3zM291 442h1v3h-1z" fill="#2a5ccc"/><path d="M290 442h3v3h-3z" fill="#2a5ccc" fill-opacity="0.4"/><path d="M302 452h3v1h-3zM303 451h1v3h-1z" fill="#1c1c78"/><path d="M302 451h3v3h-3z" fill="#1c1c78" fill-opacity="0.4"/><path d="M230 442h3v1h-3zM231 441h1v3h-1z" fill="#2a5ccc"/><path d="M230 441h3v3h-3z" fill="#2a5ccc" fill-opacity="0.4"/><path d="M242 441h3v1h-3zM243 440h1v3h-1z" fill="#3aa6dc"/><path d="M242 440h3v3h-3z" fill="#3aa6dc" fill-opacity="0.4"/><path d="M248 439h3v1h-3zM249 438h1v3h-1z" fill="#3aa6dc"/><path d="M248 438h3v3h-3z" fill="#3aa6dc" fill-opacity="0.4"/><path d="M249 444h3v1h-3zM250 443h1v3h-1z" fill="#3aa6dc"/><path d="M249 443h3v3h-3z" fill="#3aa6dc" fill-opacity="0.4"/><path d="M249 449h3v1h-3zM250 448h1v3h-1z" fill="#3aa6dc"/><path d="M249 448h3v3h-3z" fill="#3aa6dc" fill-opacity="0.4"/><path d="M248 452h3v1h-3zM249 451h1v3h-1z" fill="#3aa6dc"/><path d="M248 451h3v3h-3z" fill="#3aa6dc" fill-opacity="0.4"/><path d="M247 453h3v1h-3zM248 452h1v3h-1z" fill="#3aa6dc"/><path d="M247 452h3v3h-3z" fill="#3aa6dc" fill-opacity="0.4"/><path d="M243 452h3v1h-3zM244 451h1v3h-1z" fill="#3aa6dc"/><path d="M243 451h3v3h-3z" fill="#3aa6dc" fill-opacity="0.4"/><path d="M241 454h3v1h-3zM242 453h1v3h-1z" fill="#3aa6dc"/><path d="M241 453h3v3h-3z" fill="#3aa6dc" fill-opacity="0.4"/><path d="M237 456h3v1h-3zM238 455h1v3h-1z" fill="#3aa6dc"/><path d="M237 455h3v3h-3z" fill="#3aa6dc" fill-opacity="0.4"/><path d="M233 454h3v1h-3zM234 453h1v3h-1z" fill="#3aa6dc"/><path d="M233 453h3v3h-3z" fill="#3aa6dc" fill-opacity="0.4"/><path d="M229 452h3v1h-3zM230 451h1v3h-1z" fill="#3aa6dc"/><path d="M229 451h3v3h-3z" fill="#3aa6dc" fill-opacity="0.4"/><path d="M227 448h3v1h-3zM228 447h1v3h-1z" fill="#3aa6dc"/><path d="M227 447h3v3h-3z" fill="#3aa6dc" fill-opacity="0.4"/><path d="M266 446h3v1h-3zM267 445h1v3h-1z" fill="#3aa6dc"/><path d="M266 445h3v3h-3z" fill="#3aa6dc" fill-opacity="0.4"/><path d="M253 451h3v1h-3zM254 450h1v3h-1z" fill="#3aa6dc"/><path d="M253 450h3v3h-3z" fill="#3aa6dc" fill-opacity="0.4"/><path d="M248 458h3v1h-3zM249 457h1v3h-1z" fill="#3aa6dc"/><path d="M248 457h3v3h-3z" fill="#3aa6dc" fill-opacity="0.4"/><path d="M257 465h3v1h-3zM258 464h1v3h-1z" fill="#3aa6dc"/><path d="M257 464h3v3h-3z" fill="#3aa6dc" fill-opacity="0.4"/><path d="M255 452h3v1h-3zM256 451h1v3h-1z" fill="#1c1c78"/><path d="M255 451h3v3h-3z" fill="#1c1c78" fill-opacity="0.4"/><path d="M257 452h3v1h-3zM258 451h1v3h-1z" fill="#1c1c78"/><path d="M257 451h3v3h-3z" fill="#1c1c78" fill-opacity="0.4"/><path d="M263 450h3v1h-3zM264 449h1v3h-1z" fill="#2a5ccc"/><path d="M263 449h3v3h-3z" fill="#2a5ccc" fill-opacity="0.4"/><path d="M252 460h3v1h-3zM253 459h1v3h-1z" fill="#2a5ccc"/><path d="M252 459h3v3h-3z" fill="#2a5ccc" fill-opacity="0.4"/><path d="M253 462h3v1h-3zM254 461h1v3h-1z" fill="#2a5ccc"/><path d="M253 461h3v3h-3z" fill="#2a5ccc" fill-opacity="0.4"/><path d="M254 463h3v1h-3zM255 462h1v3h-1z" fill="#2a5ccc"/><path d="M254 462h3v3h-3z" fill="#2a5ccc" fill-opacity="0.4"/><path d="M250 461h3v1h-3zM251 460h1v3h-1z" fill="#d8702a"/><path d="M250 460h3v3h-3z" fill="#d8702a" fill-opacity="0.4"/><path d="M248 470h3v1h-3zM249 469h1v3h-1z" fill="#2a5ccc"/><path d="M248 469h3v3h-3z" fill="#2a5ccc" fill-opacity="0.4"/><rect x="77.5" y="547.5" width="329" height="84" fill="none" stroke="#000"/><path d="M74 553.5H77" stroke="#000"/><path d="M74 557.5H77" stroke="#000"/><path d="M74 567.5H77" stroke="#000"/><path d="M74 571.5H77" stroke="#000"/><path d="M74 576.5H77" stroke="#000"/><path d="M74 580.5H77" stroke="#000"/><path d="M74 589.5H77" stroke="#000"/><path d="M74 594.5H77" stroke="#000"/><path d="M74 598.5H77" stroke="#000"/><path d="M74 603.5H77" stroke="#000"/><path d="M74 612.5H77" stroke="#000"/><path d="M74 617.5H77" stroke="#000"/><path d="M74 621.5H77" stroke="#000"/><path d="M74 626.5H77" stroke="#000"/><path d="M69 562.5H77" stroke="#000"/><path d="M69 585.5H77" stroke="#000"/><path d="M69 608.5H77" stroke="#000"/><path d="M69 630.5H77" stroke="#000"/><text x="63" y="566.5" font-size="12" fill="#8b2222" text-anchor="end">7500</text><text x="63" y="589.5" font-size="12" fill="#8b2222" text-anchor="end">5000</text><text x="63" y="612.5" font-size="12" fill="#8b2222" text-anchor="end">2500</text><text x="63" y="634.5" font-size="12" fill="#8b2222" text-anchor="end">0</text><path d="M82.5 632V636" stroke="#000"/><path d="M93.5 632V641" stroke="#000"/><path d="M104.5 632V636" stroke="#000"/><path d="M115.5 632V636" stroke="#000"/><path d="M126.5 632V636" stroke="#000"/><path d="M136.5 632V636" stroke="#000"/><path d="M147.5 632V641" stroke="#000"/><path d="M158.5 632V636" stroke="#000"/><path d="M169.5 632V636" stroke="#000"/><path d="M180.5 632V636" stroke="#000"/><path d="M190.5 632V636" stroke="#000"/><path d="M201.5 632V641" stroke="#000"/><path d="M212.5 632V636" stroke="#000"/><path d="M223.5 632V636" stroke="#000"/><path d="M234.5 632V636" stroke="#000"/><path d="M244.5 632V636" stroke="#000"/><path d="M255.5 632V641" stroke="#000"/><path d="M266.5 632V636" stroke="#000"/><path d="M277.5 632V636" stroke="#000"/><path d="M288.5 632V636" stroke="#000"/><path d="M298.5 632V636" stroke="#000"/><path d="M309.5 632V641" stroke="#000"/><path d="M320.5 632V636" stroke="#000"/><path d="M331.5 632V636" stroke="#000"/><path d="M342.5 632V636" stroke="#000"/><path d="M352.5 632V636" stroke="#000"/><path d="M363.5 632V641" stroke="#000"/><path d="M374.5 632V636" stroke="#000"/><path d="M385.5 632V636" stroke="#000"/><path d="M396.5 632V636" stroke="#000"/><text x="93.7" y="653.4" font-size="12" fill="#6b4a2a" text-anchor="middle">3200</text><text x="147.7" y="653.4" font-size="12" fill="#6b4a2a" text-anchor="middle">3225</text><text x="201.7" y="653.4" font-size="12" fill="#6b4a2a" text-anchor="middle">3250</text><text x="255.7" y="653.4" font-size="12" fill="#6b4a2a" text-anchor="middle">3275</text><text x="309.7" y="653.4" font-size="12" fill="#6b4a2a" text-anchor="middle">3300</text><text x="363.7" y="653.4" font-size="12" fill="#6b4a2a" text-anchor="middle">3325</text><text x="241" y="672.5" font-size="12" fill="#6b4a2a" text-anchor="middle">Distance</text><text transform="translate(22,589.5) rotate(-90)" font-size="12" fill="#8b2222" text-anchor="middle">rpm</text><text x="88" y="620" font-size="12" fill="#101010" text-anchor="start">Z Axis : map1</text><text x="20" y="650.7" font-size="9" fill="#5a3c1c" text-anchor="start">3326</text><text x="20" y="661" font-size="9" fill="#8b1c1c" text-anchor="start">4727</text><text x="20" y="672" font-size="9" fill="#22a030" text-anchor="start">1943</text><path d="M365.5 548V631M78 587.5H406" stroke="#000"/><rect x="80" y="602" width="1" height="2" fill="#1c1c78"/><rect x="79" y="603" width="1" height="1" fill="#1c1c78"/><rect x="86" y="602" width="1" height="2" fill="#1c1c78"/><rect x="85" y="603" width="1" height="1" fill="#1c1c78"/><rect x="92" y="601" width="1" height="2" fill="#1c1c78"/><rect x="91" y="602" width="1" height="1" fill="#1c1c78"/><rect x="98" y="600" width="1" height="2" fill="#1c1c78"/><rect x="97" y="601" width="1" height="1" fill="#1c1c78"/><rect x="104" y="599" width="1" height="2" fill="#1c1c78"/><rect x="103" y="600" width="1" height="1" fill="#1c1c78"/><rect x="111" y="598" width="1" height="2" fill="#5e1870"/><rect x="110" y="599" width="1" height="1" fill="#5e1870"/><rect x="118" y="596" width="1" height="2" fill="#5e1870"/><rect x="117" y="597" width="1" height="1" fill="#5e1870"/><rect x="125" y="594" width="1" height="3" fill="#8c1c1c"/><rect x="124" y="595" width="1" height="1" fill="#8c1c1c"/><rect x="132" y="593" width="1" height="3" fill="#8c1c1c"/><rect x="131" y="594" width="1" height="1" fill="#8c1c1c"/><rect x="140" y="590" width="1" height="4" fill="#8c1c1c"/><rect x="139" y="591" width="1" height="1" fill="#8c1c1c"/><rect x="139" y="593" width="1" height="1" fill="#8c1c1c"/><rect x="148" y="584" width="1" height="3" fill="#e99a2c"/><rect x="147" y="585" width="1" height="1" fill="#e99a2c"/><rect x="148" y="587" width="1" height="3" fill="#8c1c1c"/><rect x="147" y="588" width="1" height="1" fill="#8c1c1c"/><rect x="157" y="580" width="1" height="5" fill="#e99a2c"/><rect x="156" y="581" width="1" height="1" fill="#e99a2c"/><rect x="156" y="583" width="1" height="1" fill="#e99a2c"/><rect x="166" y="580" width="1" height="4" fill="#8c1c1c"/><rect x="165" y="581" width="1" height="1" fill="#8c1c1c"/><rect x="165" y="583" width="1" height="1" fill="#8c1c1c"/><rect x="166" y="588" width="1" height="3" fill="#2a5ccc"/><rect x="165" y="589" width="1" height="1" fill="#2a5ccc"/><rect x="176" y="587" width="1" height="3" fill="#3aa6dc"/><rect x="175" y="588" width="1" height="1" fill="#3aa6dc"/><rect x="185" y="587" width="1" height="2" fill="#3aa6dc"/><rect x="184" y="588" width="1" height="1" fill="#3aa6dc"/><rect x="195" y="586" width="1" height="3" fill="#2a5ccc"/><rect x="194" y="587" width="1" height="1" fill="#2a5ccc"/><rect x="204" y="586" width="1" height="3" fill="#1c1c78"/><rect x="203" y="587" width="1" height="1" fill="#1c1c78"/><rect x="214" y="584" width="1" height="3" fill="#8c1c1c"/><rect x="213" y="585" width="1" height="1" fill="#8c1c1c"/><rect x="224" y="582" width="1" height="4" fill="#8c1c1c"/><rect x="223" y="583" width="1" height="1" fill="#8c1c1c"/><rect x="223" y="585" width="1" height="1" fill="#8c1c1c"/><rect x="234" y="576" width="1" height="5" fill="#e99a2c"/><rect x="233" y="577" width="1" height="1" fill="#e99a2c"/><rect x="233" y="579" width="1" height="1" fill="#e99a2c"/><rect x="244" y="574" width="1" height="4" fill="#e99a2c"/><rect x="243" y="575" width="1" height="1" fill="#e99a2c"/><rect x="243" y="577" width="1" height="1" fill="#e99a2c"/><rect x="255" y="568" width="1" height="8" fill="#e99a2c"/><rect x="254" y="569" width="1" height="1" fill="#e99a2c"/><rect x="254" y="571" width="1" height="1" fill="#e99a2c"/><rect x="254" y="573" width="1" height="1" fill="#e99a2c"/><rect x="254" y="575" width="1" height="1" fill="#e99a2c"/><rect x="267" y="569" width="1" height="4" fill="#d8702a"/><rect x="266" y="570" width="1" height="1" fill="#d8702a"/><rect x="266" y="572" width="1" height="1" fill="#d8702a"/><rect x="267" y="574" width="1" height="5" fill="#1c1c78"/><rect x="266" y="575" width="1" height="1" fill="#1c1c78"/><rect x="266" y="577" width="1" height="1" fill="#1c1c78"/><rect x="279" y="578" width="1" height="7" fill="#3aa6dc"/><rect x="278" y="579" width="1" height="1" fill="#3aa6dc"/><rect x="278" y="581" width="1" height="1" fill="#3aa6dc"/><rect x="278" y="583" width="1" height="1" fill="#3aa6dc"/><rect x="291" y="584" width="1" height="5" fill="#3aa6dc"/><rect x="290" y="585" width="1" height="1" fill="#3aa6dc"/><rect x="290" y="587" width="1" height="1" fill="#3aa6dc"/><rect x="303" y="589" width="1" height="6" fill="#3aa6dc"/><rect x="302" y="590" width="1" height="1" fill="#3aa6dc"/><rect x="302" y="592" width="1" height="1" fill="#3aa6dc"/><rect x="302" y="594" width="1" height="1" fill="#3aa6dc"/><rect x="315" y="590" width="1" height="4" fill="#1c1c78"/><rect x="314" y="591" width="1" height="1" fill="#1c1c78"/><rect x="314" y="593" width="1" height="1" fill="#1c1c78"/><rect x="327" y="590" width="1" height="3" fill="#5e1870"/><rect x="326" y="591" width="1" height="1" fill="#5e1870"/><rect x="339" y="589" width="1" height="3" fill="#8c1c1c"/><rect x="338" y="590" width="1" height="1" fill="#8c1c1c"/><rect x="352" y="588" width="1" height="3" fill="#8c1c1c"/><rect x="351" y="589" width="1" height="1" fill="#8c1c1c"/><rect x="364" y="587" width="1" height="2" fill="#d8702a"/><rect x="363" y="588" width="1" height="1" fill="#d8702a"/><rect x="377" y="585" width="1" height="2" fill="#e99a2c"/><rect x="376" y="586" width="1" height="1" fill="#e99a2c"/><rect x="391" y="587" width="1" height="3" fill="#1c1c78"/><rect x="390" y="588" width="1" height="1" fill="#1c1c78"/><path d="M486 219.5H488" stroke="#000"/><path d="M486 216.5H488" stroke="#000"/><path d="M486 213.5H488" stroke="#000"/><path d="M486 210.5H488" stroke="#000"/><path d="M486 203.5H488" stroke="#000"/><path d="M486 200.5H488" stroke="#000"/><path d="M486 197.5H488" stroke="#000"/><path d="M486 193.5H488" stroke="#000"/><path d="M486 187.5H488" stroke="#000"/><path d="M486 183.5H488" stroke="#000"/><path d="M486 180.5H488" stroke="#000"/><path d="M486 177.5H488" stroke="#000"/><path d="M486 170.5H488" stroke="#000"/><path d="M486 167.5H488" stroke="#000"/><path d="M486 164.5H488" stroke="#000"/><path d="M486 160.5H488" stroke="#000"/><path d="M486 154.5H488" stroke="#000"/><path d="M486 151.5H488" stroke="#000"/><path d="M486 147.5H488" stroke="#000"/><path d="M486 144.5H488" stroke="#000"/><path d="M486 138.5H488" stroke="#000"/><path d="M486 134.5H488" stroke="#000"/><path d="M486 131.5H488" stroke="#000"/><path d="M486 128.5H488" stroke="#000"/><path d="M486 121.5H488" stroke="#000"/><path d="M486 118.5H488" stroke="#000"/><path d="M486 115.5H488" stroke="#000"/><path d="M486 111.5H488" stroke="#000"/><path d="M486 105.5H488" stroke="#000"/><path d="M486 102.5H488" stroke="#000"/><path d="M486 98.5H488" stroke="#000"/><path d="M486 95.5H488" stroke="#000"/><path d="M486 88.5H488" stroke="#000"/><path d="M486 85.5H488" stroke="#000"/><path d="M486 82.5H488" stroke="#000"/><path d="M486 79.5H488" stroke="#000"/><path d="M486 72.5H488" stroke="#000"/><path d="M486 69.5H488" stroke="#000"/><path d="M486 66.5H488" stroke="#000"/><path d="M486 62.5H488" stroke="#000"/><path d="M481 223.5H488" stroke="#000"/><path d="M481 206.5H488" stroke="#000"/><path d="M481 190.5H488" stroke="#000"/><path d="M481 174.5H488" stroke="#000"/><path d="M481 157.5H488" stroke="#000"/><path d="M481 141.5H488" stroke="#000"/><path d="M481 124.5H488" stroke="#000"/><path d="M481 108.5H488" stroke="#000"/><path d="M481 92.5H488" stroke="#000"/><path d="M481 75.5H488" stroke="#000"/><path d="M481 59.5H488" stroke="#000"/><text x="474.5" y="227.5" font-size="12" fill="#6c6c6c" text-anchor="end">0.0</text><text x="474.5" y="210.5" font-size="12" fill="#6c6c6c" text-anchor="end">10.0</text><text x="474.5" y="194.5" font-size="12" fill="#6c6c6c" text-anchor="end">20.0</text><text x="474.5" y="178.5" font-size="12" fill="#6c6c6c" text-anchor="end">30.0</text><text x="474.5" y="161.5" font-size="12" fill="#6c6c6c" text-anchor="end">40.0</text><text x="474.5" y="145.5" font-size="12" fill="#6c6c6c" text-anchor="end">50.0</text><text x="474.5" y="128.5" font-size="12" fill="#6c6c6c" text-anchor="end">60.0</text><text x="474.5" y="112.5" font-size="12" fill="#6c6c6c" text-anchor="end">70.0</text><text x="474.5" y="96.5" font-size="12" fill="#6c6c6c" text-anchor="end">80.0</text><text x="474.5" y="79.5" font-size="12" fill="#6c6c6c" text-anchor="end">90.0</text><text x="474.5" y="63.5" font-size="12" fill="#6c6c6c" text-anchor="end">100.0</text><text transform="translate(434,139.7) rotate(-90)" font-size="11.6" fill="#6c6c6c" text-anchor="middle">trqFuelSev (%)</text><path d="M718.5 222V168.5H728.5V209.5H738.5V222Z M902.5 222V183.5H913.5V222Z M923.5 222V195.5H933.5V192.5H943.5V222Z" fill="#f0f0f0" stroke="#686868"/><path d="M491 222.5H1165" stroke="#b8b8b8"/><path d="M490.5 201.5H713.5V216.5H767.5V201.5H889.5V216.5H978.5V201.5H1165.5" fill="none" stroke="#2aa080"/><path d="M490.5 140.5H564.5V132.5H572.5V140.5H801.5V139.5H810.5V134.5H820.5V140.5H1015.5V139.5H1026.5V133.5H1037.5V140.5H1165.5" fill="none" stroke="#2a8a2a"/><path d="M490.5 125.5H574.5V130.5H606.5V133.5H615.5V136.5H647.5V140.5H657.5V142.5H667.5V148.5H678.5V154.5H687.5V166.5H698.5V178.5H719.5V181.5H739.5V178.5H749.5V125.5H831.5V133.5H842.5V136.5H852.5V140.5H861.5V154.5H873.5V170.5H882.5V178.5H913.5V181.5H954.5V125.5H1035.5V127.5H1047.5V133.5H1057.5V136.5H1067.5V139.5H1077.5V145.5H1088.5V158.5H1098.5V172.5H1108.5V178.5H1139.5V137.5H1150.5V125.5H1165.5" fill="none" stroke="#9a30b8"/><path d="M490.5 71.5H502.5V69.5H534.5V66.5H554.5V68.5H575.5V66.5H596.5V70.5H606.5V72.5H615.5V75.5H627.5V76.5H647.5V72.5H657.5V70.5H667.5V71.5H678.5V72.5H688.5V68.5H698.5V65.5H708.5V66.5H718.5V74.5H770.5V84.5H780.5V94.5H790.5V104.5H801.5V113.5H820.5V86.5H831.5V72.5H842.5V61.5H852.5V62.5H862.5V63.5H873.5V58.5H882.5V60.5H893.5V74.5H985.5V84.5H995.5V94.5H1005.5V104.5H1016.5V113.5H1026.5V117.5H1037.5V84.5H1047.5V72.5H1056.5V63.5H1067.5V65.5H1077.5V62.5H1088.5V63.5H1098.5V60.5H1109.5V61.5H1129.5V63.5H1139.5V84.5H1150.5V86.5H1159.5V93.5H1165.5" fill="none" stroke="#1a2a68"/><path d="M490.5 98.5H495.5V101.5H499.5V105.5H502.5V107.5H506.5V109.5H511.5V110.5H519.5V109.5H524.5V106.5H531.5V109.5H535.5V113.5H540.5V115.5H543.5V118.5H547.5V121.5H552.5V125.5H556.5V126.5H561.5V125.5H564.5V124.5H568.5V116.5H572.5V131.5H575.5V140.5H580.5V137.5H584.5V140.5H588.5V147.5H593.5V152.5H597.5V147.5H602.5V148.5H606.5V150.5H610.5H614.5V149.5H617.5V146.5H624.5V144.5H629.5V136.5H634.5V138.5H638.5V135.5H643.5V128.5H647.5V126.5H651.5V123.5H655.5V127.5H658.5V132.5H662.5V141.5H667.5V152.5H671.5V159.5H675.5V161.5H680.5V159.5H684.5V153.5H691.5V152.5H695.5V164.5H700.5V168.5H704.5V174.5H708.5V176.5H712.5V178.5H716.5V180.5H721.5V145.5H724.5V58.5H728.5V66.5H733.5V119.5H737.5V142.5H741.5V192.5H744.5V213.5H748.5V182.5H754.5V175.5H757.5V194.5H761.5V202.5H766.5V204.5H774.5V201.5H777.5V191.5H782.5V188.5H786.5V186.5H790.5V182.5H795.5V180.5H798.5V178.5H803.5V174.5H807.5V162.5H811.5V156.5H815.5V122.5H819.5V60.5H822.5V58.5H827.5V59.5H831.5V64.5H835.5V80.5H840.5V95.5H848.5V122.5H851.5V131.5H856.5V144.5H860.5V152.5H863.5V150.5H873.5V166.5H876.5V185.5H881.5V187.5H884.5V188.5H892.5H897.5V179.5H900.5V168.5H904.5V58.5H908.5V64.5H914.5V77.5H917.5V122.5H921.5V154.5H926.5V167.5H930.5V143.5H934.5V102.5H937.5V75.5H942.5V97.5H946.5V116.5H950.5V193.5H954.5V185.5H958.5V172.5H963.5V157.5H967.5V169.5H970.5V184.5H974.5V188.5H979.5V192.5H983.5V194.5H987.5V192.5H991.5V194.5H995.5V196.5H1000.5V197.5H1004.5V198.5H1008.5V196.5H1012.5V194.5H1016.5V191.5H1020.5V184.5H1024.5V174.5H1028.5V154.5H1032.5V98.5H1036.5V58.5H1044.5V64.5H1048.5V80.5H1052.5V82.5H1056.5V93.5H1060.5V96.5H1064.5V118.5H1069.5V127.5H1077.5V134.5H1080.5V140.5H1086.5V151.5H1089.5V159.5H1094.5V157.5H1098.5V162.5H1102.5V167.5H1106.5V173.5H1110.5V178.5H1118.5V181.5H1126.5V186.5H1131.5V195.5H1134.5V205.5H1139.5V204.5H1147.5V172.5H1151.5V175.5H1156.5V194.5H1159.5V201.5H1163.5V208.5H1165.5" fill="none" stroke="#8a6a28"/><path d="M1111.5 57V224" stroke="#000"/><path d="M488 56H1167V226H488Z" fill="none"/><rect x="488" y="56" width="679" height="2" fill="#000"/><rect x="1165" y="56" width="2" height="170" fill="#000"/><rect x="488" y="224" width="679" height="2" fill="#000"/><rect x="488" y="56" width="2" height="170" fill="#000"/><rect x="490" y="58" width="1" height="166" fill="#c01818"/><path d="M480 216L488 220.5L480 225Z" fill="#505050"/><text x="494.6" y="222.5" font-size="9" fill="#202020" text-anchor="start">1.5</text><path d="M490 226H495L490 234Z" fill="#505050"/><text x="498.5" y="232.5" font-size="9" fill="#202020" text-anchor="start">0.0</text><path d="M716 55.5L719.2 50L722.5 55.5Z" fill="#404040"/><text x="726.9" y="56" font-size="9" fill="#202020" text-anchor="start">33.0</text><rect x="490.5" y="250.5" width="675" height="69" fill="none" stroke="#c4c4c4"/><path d="M486 312.5H490" stroke="#a8a8a8"/><path d="M486 307.5H490" stroke="#a8a8a8"/><path d="M486 302.5H490" stroke="#a8a8a8"/><path d="M486 297.5H490" stroke="#a8a8a8"/><path d="M486 286.5H490" stroke="#a8a8a8"/><path d="M486 281.5H490" stroke="#a8a8a8"/><path d="M486 276.5H490" stroke="#a8a8a8"/><path d="M486 271.5H490" stroke="#a8a8a8"/><path d="M486 260.5H490" stroke="#a8a8a8"/><path d="M486 255.5H490" stroke="#a8a8a8"/><path d="M481 317.5H490" stroke="#a8a8a8"/><path d="M481 292.5H490" stroke="#a8a8a8"/><path d="M481 266.5H490" stroke="#a8a8a8"/><text x="474.5" y="321.5" font-size="12" fill="#b81c3a" text-anchor="end">0.0</text><text x="474.5" y="296.5" font-size="12" fill="#b81c3a" text-anchor="end">100.0</text><text x="474.5" y="270.5" font-size="12" fill="#b81c3a" text-anchor="end">200.0</text><text transform="translate(434,284) rotate(-90)" font-size="11" fill="#b81c3a" text-anchor="middle">vehicleSpeed</text><path d="M490.5 308.5H494.5V307.5H506.5V306.5H511.5V304.5H523.5V303.5H544.5V304.5H556.5V301.5H560.5V293.5H564.5V281.5H568.5V268.5H572.5V255.5H577.5V252.5H716.5V254.5H725.5V256.5H729.5V265.5H733.5V284.5H737.5V317.5H741.5H798.5V315.5H802.5V309.5H807.5V297.5H811.5V285.5H815.5V273.5H818.5V267.5H823.5V265.5H831.5V263.5H836.5V255.5H840.5V253.5H941.5V268.5H946.5V310.5H950.5V317.5H1011.5V315.5H1016.5V311.5H1020.5V302.5H1024.5V291.5H1028.5V280.5H1033.5V271.5H1037.5V270.5H1041.5V268.5H1045.5V260.5H1048.5V255.5H1053.5V253.5H1113.5V258.5H1118.5V267.5H1122.5V280.5H1126.5V294.5H1130.5V302.5H1143.5V304.5H1147.5V317.5H1165.5" fill="none" stroke="#3050c0"/><path d="M490.5 304.5H544.5V303.5H585.5V302.5H626.5H647.5V301.5H688.5V299.5H709.5V298.5H728.5V297.5H749.5V296.5H790.5H831.5V295.5H873.5V294.5H893.5V293.5H914.5V292.5H934.5V291.5H1024.5V290.5H1058.5H1100.5V289.5H1140.5V287.5H1165.5" fill="none" stroke="#b0203c"/><path d="M1111.5 251V319" stroke="#000"/><rect x="490" y="250" width="1" height="71" fill="#d03030"/><rect x="480" y="288" width="9" height="2" fill="#d01a30"/><path d="M480 292L488.5 296.5L480 301Z" fill="#e01a30" stroke="#302020" stroke-width="0.8"/><text x="495" y="300" font-size="9" fill="#101010" text-anchor="start">82.2</text><path d="M490 321H495L490 328Z" fill="#e01a30"/><text x="498.2" y="327.6" font-size="9" fill="#101010" text-anchor="start">49.9</text><text x="1128.3" y="248.5" font-size="9" fill="#101010" text-anchor="start">113.9</text><path d="M1155.5 249L1159.5 242L1163.5 249Z" fill="#e01a30" stroke="#302020" stroke-width="0.6"/><rect x="490.5" y="345.5" width="675" height="130" fill="none" stroke="#c4c4c4"/><path d="M486 467.5H490" stroke="#a8a8a8"/><path d="M486 462.5H490" stroke="#a8a8a8"/><path d="M486 456.5H490" stroke="#a8a8a8"/><path d="M486 451.5H490" stroke="#a8a8a8"/><path d="M486 440.5H490" stroke="#a8a8a8"/><path d="M486 434.5H490" stroke="#a8a8a8"/><path d="M486 429.5H490" stroke="#a8a8a8"/><path d="M486 423.5H490" stroke="#a8a8a8"/><path d="M486 412.5H490" stroke="#a8a8a8"/><path d="M486 407.5H490" stroke="#a8a8a8"/><path d="M486 401.5H490" stroke="#a8a8a8"/><path d="M486 396.5H490" stroke="#a8a8a8"/><path d="M486 385.5H490" stroke="#a8a8a8"/><path d="M486 379.5H490" stroke="#a8a8a8"/><path d="M486 374.5H490" stroke="#a8a8a8"/><path d="M486 368.5H490" stroke="#a8a8a8"/><path d="M486 357.5H490" stroke="#a8a8a8"/><path d="M486 352.5H490" stroke="#a8a8a8"/><path d="M486 346.5H490" stroke="#a8a8a8"/><path d="M481 473.5H490" stroke="#a8a8a8"/><path d="M481 445.5H490" stroke="#a8a8a8"/><path d="M481 418.5H490" stroke="#a8a8a8"/><path d="M481 390.5H490" stroke="#a8a8a8"/><path d="M481 363.5H490" stroke="#a8a8a8"/><text x="474.5" y="477.5" font-size="12" fill="#2c6a50" text-anchor="end">0</text><text x="474.5" y="449.5" font-size="12" fill="#2c6a50" text-anchor="end">1000</text><text x="474.5" y="422.5" font-size="12" fill="#2c6a50" text-anchor="end">2000</text><text x="474.5" y="394.5" font-size="12" fill="#2c6a50" text-anchor="end">3000</text><text x="474.5" y="367.5" font-size="12" fill="#2c6a50" text-anchor="end">4000</text><text transform="translate(434,410.5) rotate(-90)" font-size="11.3" fill="#2c6a50" text-anchor="middle">map1CELL</text><path d="M490.5 452.5H510.5V450.5H520.5V448.5H561.5V445.5H564.5V444.5H569.5V441.5H577.5V440.5H592.5V439.5H601.5V438.5H614.5V437.5H622.5V436.5H634.5V434.5H643.5H650.5H654.5V433.5H662.5V431.5H667.5V430.5H676.5V427.5H679.5V426.5H684.5V425.5H687.5V423.5H691.5H695.5V420.5H700.5V417.5H704.5V416.5H708.5V414.5H712.5V411.5H716.5V409.5H721.5V407.5H725.5V405.5H729.5V404.5H736.5V419.5H741.5V451.5H745.5V462.5H749.5V464.5H753.5V466.5H758.5V468.5H762.5V469.5H766.5V470.5H782.5H799.5H802.5V468.5H807.5V462.5H810.5V447.5H814.5V443.5H818.5V442.5H822.5V441.5H827.5V440.5H831.5V438.5H836.5V437.5H839.5V436.5H844.5V434.5H847.5V433.5H852.5V431.5H855.5V429.5H860.5V427.5H864.5V425.5H868.5V423.5H872.5V420.5H877.5V417.5H880.5V415.5H885.5V413.5H888.5V411.5H893.5V410.5H896.5V408.5H901.5V407.5H905.5V406.5H909.5V405.5H917.5V404.5H934.5V403.5H945.5V419.5H951.5V452.5H954.5V463.5H958.5V467.5H966.5V469.5H970.5V470.5H1004.5V469.5H1011.5V468.5H1016.5V462.5H1024.5V451.5H1028.5V445.5H1032.5V443.5H1037.5V441.5H1041.5V440.5H1045.5H1053.5V437.5H1057.5V436.5H1065.5V435.5H1070.5V433.5H1073.5V432.5H1078.5V431.5H1082.5V430.5H1086.5V427.5H1090.5V426.5H1094.5V424.5H1098.5V422.5H1101.5V420.5H1106.5V417.5H1110.5V416.5H1114.5V412.5H1119.5V411.5H1123.5V410.5H1127.5V414.5H1131.5V424.5H1135.5V430.5H1139.5V437.5H1143.5V435.5H1147.5V447.5H1151.5V461.5H1155.5V466.5H1160.5V468.5H1165.5" fill="none" stroke="#8a1a4c"/><path d="M490.5 453.5H502.5V452.5H513.5V451.5H544.5V450.5H561.5V448.5H564.5V446.5H572.5V444.5H577.5V442.5H597.5V441.5H610.5V440.5H630.5V438.5H643.5V437.5H650.5H656.5V435.5H662.5V434.5H676.5V430.5H684.5V429.5H692.5V426.5H700.5V423.5H704.5V420.5H708.5V418.5H717.5V415.5H721.5V413.5H725.5V411.5H729.5V410.5H736.5V424.5H740.5V452.5H745.5V462.5H749.5V465.5H766.5V469.5H802.5V462.5H810.5V445.5H815.5V446.5H818.5V444.5H822.5V443.5H827.5V441.5H836.5V440.5H844.5V436.5H852.5V434.5H860.5V430.5H868.5V426.5H872.5V424.5H877.5V422.5H880.5V419.5H885.5V417.5H893.5V416.5H896.5V414.5H905.5V412.5H913.5V410.5H922.5H934.5V409.5H945.5V423.5H951.5V454.5H954.5V464.5H958.5V468.5H966.5V470.5H1004.5V469.5H1011.5V468.5H1016.5V466.5H1020.5V462.5H1024.5V452.5H1028.5V446.5H1032.5V444.5H1041.5V441.5H1053.5V440.5H1065.5V436.5H1073.5V434.5H1082.5V431.5H1090.5V429.5H1098.5V425.5H1106.5V422.5H1110.5V420.5H1114.5V418.5H1119.5V417.5H1127.5V419.5H1131.5V426.5H1135.5V432.5H1139.5V438.5H1143.5V439.5H1147.5V448.5H1151.5V463.5H1155.5V467.5H1165.5" fill="none" stroke="#22a022"/><path d="M490.5 452.5H560.5V446.5H577.5V440.5H643.5V434.5H656.5V435.5H676.5V429.5H691.5V424.5H704.5V418.5H717.5V413.5H729.5V408.5H736.5V424.5H740.5V452.5H745.5V463.5H766.5V473.5H802.5V463.5H807.5V462.5H810.5V446.5H827.5V440.5H844.5V435.5H860.5V430.5H868.5V424.5H880.5V418.5H896.5V413.5H921.5V407.5H945.5V424.5H951.5V454.5H954.5V463.5H966.5V473.5H1011.5V463.5H1020.5V462.5H1024.5V452.5H1028.5V447.5H1041.5V440.5H1065.5V435.5H1086.5V430.5H1098.5V424.5H1111.5V420.5H1114.5V418.5H1130.5V429.5H1134.5V435.5H1139.5V440.5H1147.5V447.5H1151.5V462.5H1155.5V463.5H1165.5" fill="none" stroke="#145a2c"/><path d="M1111.5 346V475" stroke="#000"/><rect x="490" y="345" width="1" height="131" fill="#d03030"/><rect x="481" y="417" width="8" height="2" fill="#1a5a30"/><path d="M480 438L488.5 442L480 446Z" fill="#1a5a30"/><text x="495" y="445" font-size="9" fill="#101010" text-anchor="start">1155</text><path d="M724 343.5L728.3 336L732.6 343.5Z" fill="#1a5a30"/><text x="735.4" y="343.4" font-size="9" fill="#101010" text-anchor="start">2400</text><path d="M761.5 477.5H770L765.8 484.5Z" fill="#1a5a30"/><text x="773" y="484" font-size="9" fill="#101010" text-anchor="start">0</text><rect x="490.5" y="501.5" width="675" height="124" fill="none" stroke="#c4c4c4"/><path d="M486 618.5H490" stroke="#a8a8a8"/><path d="M486 613.5H490" stroke="#a8a8a8"/><path d="M486 607.5H490" stroke="#a8a8a8"/><path d="M486 602.5H490" stroke="#a8a8a8"/><path d="M486 591.5H490" stroke="#a8a8a8"/><path d="M486 586.5H490" stroke="#a8a8a8"/><path d="M486 581.5H490" stroke="#a8a8a8"/><path d="M486 575.5H490" stroke="#a8a8a8"/><path d="M486 565.5H490" stroke="#a8a8a8"/><path d="M486 559.5H490" stroke="#a8a8a8"/><path d="M486 554.5H490" stroke="#a8a8a8"/><path d="M486 549.5H490" stroke="#a8a8a8"/><path d="M486 538.5H490" stroke="#a8a8a8"/><path d="M486 533.5H490" stroke="#a8a8a8"/><path d="M486 528.5H490" stroke="#a8a8a8"/><path d="M486 522.5H490" stroke="#a8a8a8"/><path d="M486 512.5H490" stroke="#a8a8a8"/><path d="M486 506.5H490" stroke="#a8a8a8"/><path d="M486 501.5H490" stroke="#a8a8a8"/><path d="M481 623.5H490" stroke="#a8a8a8"/><path d="M481 597.5H490" stroke="#a8a8a8"/><path d="M481 570.5H490" stroke="#a8a8a8"/><path d="M481 544.5H490" stroke="#a8a8a8"/><path d="M481 517.5H490" stroke="#a8a8a8"/><text x="474.5" y="627.5" font-size="12" fill="#101010" text-anchor="end">0</text><text x="474.5" y="601.5" font-size="12" fill="#101010" text-anchor="end">2000</text><text x="474.5" y="574.5" font-size="12" fill="#101010" text-anchor="end">4000</text><text x="474.5" y="548.5" font-size="12" fill="#101010" text-anchor="end">6000</text><text x="474.5" y="521.5" font-size="12" fill="#101010" text-anchor="end">8000</text><text transform="translate(434,563.5) rotate(-90)" font-size="11.3" fill="#101010" text-anchor="middle">rpmCELL</text><path d="M491 623.5H1165" stroke="#e040c8"/><path d="M491 583.5H539" stroke="#40c8e0"/><path d="M539 583.5H1165" stroke="#c02a2a"/><path d="M491 575.5H713.5V563.5H715.5V575.5H722.5V563.5H723.5V575.5H740.5V563.5H742.5V575.5H750.5V563.5H752.5V575.5H894.5V563.5H896.5V575.5H948.5V563.5H949.5V575.5H961.5V563.5H1165" fill="none" stroke="#000"/><path d="M510.5 582.5H524.5V581.5H540.5V580.5H565.5V578.5H589.5V576.5H610.5V575.5H626.5V572.5H650.5V570.5H663.5V566.5H685.5V562.5H699.5V559.5H706.5V556.5H716.5V555.5H718.5V552.5H722.5V555.5H726.5V556.5H738.5V552.5H742.5V556.5H747.5V561.5H751.5V564.5H759.5V560.5H800.5V564.5H808.5V560.5H816.5V556.5H821.5V560.5H845.5V556.5H865.5V552.5H886.5V548.5H891.5V544.5H898.5V540.5H906.5V544.5H919.5V540.5H923.5V536.5H932.5V533.5H935.5V540.5H939.5V536.5H953.5V541.5H956.5V546.5H960.5V548.5H968.5V552.5H976.5V556.5H984.5V560.5H997.5V564.5H1005.5V565.5H1010.5V568.5H1026.5V564.5H1032.5H1038.5V568.5H1047.5V564.5H1054.5V568.5H1059.5V564.5H1104.5V560.5H1113.5V559.5H1128.5V556.5H1133.5V559.5H1154.5V564.5H1162.5V560.5H1165.5V557.5H1165.5" fill="none" stroke="#901818"/><path d="M510.5 582.5H540.5V580.5H589.5V576.5H629.5V572.5H663.5V567.5H680.5V564.5H700.5V560.5H708.5V555.5H712.5V554.5H716.5V551.5H720.5V554.5H724.5V556.5H736.5V551.5H740.5V555.5H745.5V560.5H749.5V563.5H757.5V560.5H798.5V563.5H806.5V560.5H814.5V555.5H819.5V560.5H843.5V555.5H863.5V551.5H884.5V547.5H889.5V543.5H896.5V539.5H904.5V543.5H917.5V539.5H921.5V535.5H930.5V532.5H933.5V539.5H937.5V536.5H951.5V540.5H954.5V545.5H958.5V548.5H966.5V552.5H974.5V555.5H982.5V559.5H995.5V563.5H1003.5V565.5H1008.5V568.5H1024.5V564.5H1030.5V563.5H1036.5V568.5H1045.5V564.5H1052.5V568.5H1057.5V563.5H1102.5V560.5H1111.5V558.5H1126.5V556.5H1131.5V559.5H1152.5V563.5H1160.5V560.5H1163.5V556.5H1165.5" fill="none" stroke="#080808"/><path d="M1111.5 502V644" stroke="#000"/><rect x="490" y="501" width="1" height="125" fill="#d03030"/><path d="M480 558L488.5 562.5L480 567Z" fill="#080808"/><text x="495" y="566" font-size="9" fill="#101010" text-anchor="start">4576</text><path d="M490 627H495L490 634.5Z" fill="#080808"/><text x="498" y="633.7" font-size="9" fill="#101010" text-anchor="start">3000</text><path d="M925.6 499.7L929.9 492.6L934.2 499.7Z" fill="#080808"/><text x="937" y="499.7" font-size="9" fill="#101010" text-anchor="start">6900</text><path d="M490 635.5H1167" stroke="#000"/><path d="M490.5 636V644M1166.5 636V644" stroke="#000"/><path d="M503.5 636V644" stroke="#000"/><path d="M524.5 636V639" stroke="#000"/><path d="M544.5 636V639" stroke="#000"/><path d="M565.5 636V639" stroke="#000"/><path d="M585.5 636V639" stroke="#000"/><path d="M606.5 636V644" stroke="#000"/><path d="M626.5 636V639" stroke="#000"/><path d="M647.5 636V639" stroke="#000"/><path d="M667.5 636V639" stroke="#000"/><path d="M688.5 636V639" stroke="#000"/><path d="M709.5 636V644" stroke="#000"/><path d="M729.5 636V639" stroke="#000"/><path d="M750.5 636V639" stroke="#000"/><path d="M770.5 636V639" stroke="#000"/><path d="M791.5 636V639" stroke="#000"/><path d="M811.5 636V644" stroke="#000"/><path d="M832.5 636V639" stroke="#000"/><path d="M853.5 636V639" stroke="#000"/><path d="M873.5 636V639" stroke="#000"/><path d="M894.5 636V639" stroke="#000"/><path d="M914.5 636V644" stroke="#000"/><path d="M935.5 636V639" stroke="#000"/><path d="M955.5 636V639" stroke="#000"/><path d="M976.5 636V639" stroke="#000"/><path d="M996.5 636V639" stroke="#000"/><path d="M1017.5 636V644" stroke="#000"/><path d="M1038.5 636V639" stroke="#000"/><path d="M1058.5 636V639" stroke="#000"/><path d="M1079.5 636V639" stroke="#000"/><path d="M1099.5 636V639" stroke="#000"/><path d="M1120.5 636V644" stroke="#000"/><path d="M1140.5 636V639" stroke="#000"/><path d="M1161.5 636V639" stroke="#000"/><text x="503" y="656.5" font-size="12.6" fill="#0a0a0a" text-anchor="middle">0:04:42.000</text><text x="605.8" y="656.5" font-size="12.6" fill="#0a0a0a" text-anchor="middle">0:04:43.000</text><text x="708.6" y="656.5" font-size="12.6" fill="#0a0a0a" text-anchor="middle">0:04:44.000</text><text x="811.4" y="656.5" font-size="12.6" fill="#0a0a0a" text-anchor="middle">0:04:45.000</text><text x="914.2" y="656.5" font-size="12.6" fill="#0a0a0a" text-anchor="middle">0:04:46.000</text><text x="1017" y="656.5" font-size="12.6" fill="#0a0a0a" text-anchor="middle">0:04:47.000</text><text x="1119.8" y="656.5" font-size="12.6" fill="#0a0a0a" text-anchor="middle">0:04:48.000</text><text x="427" y="646.6" font-size="12" fill="#202020" text-anchor="start">Time</text><text x="427" y="660.8" font-size="12" fill="#202020" text-anchor="start">(s)</text><rect x="490" y="662" width="676" height="13" fill="#dfeafb"/><path d="M492 668.5L500 664.5V673Z" fill="#6d9bd8"/><path d="M1164.5 668.5L1156 664.5V673Z" fill="#6d9bd8"/></svg>
<div style="position:absolute;left:911px;top:663px;width:10px;height:11px;border:1px solid #7fa3d8;background:linear-gradient(#d6e6fc,#a6c8f6)"></div>
<div class="lg" style="top:57px;height:167px"><div class="row"><div class="sw" style="background:#20b27a"></div><span class="n">cllEnable</span><span class="v">BANK1</span></div><div class="row"><div class="sw" style="background:#b010e0"></div><span class="n">cllTarg1</span><span class="v">0.800</span></div><div class="row"><div class="sw" style="background:#109a18"></div><span class="n">fuelAddTfc1</span><span class="v">0</span></div><div class="row"><div class="sw" style="background:#0a1a80"></div><span class="n">fuelMltCll1</span><span class="v">1.088</span></div><div class="row"><div class="sw" style="background:#a0620c"></div><span class="n">lam1</span><span class="v">0.799</span></div><div class="row hy"><div class="sw" style="background:#707070"></div><span class="n">trqFuelSev</span><span class="v">0.0</span></div></div>
<div class="lg" style="top:250px;height:69px"><div class="row"><div class="sw" style="background:#2a4af0"></div><span class="n">tps1</span><span class="v">100.0</span></div><div class="row hb"><div class="sw" style="background:#e01434"></div><span class="n">vehicleSpeed</span><span class="v">107.3</span></div></div>
<div class="lg" style="top:345px;height:130px"><div class="row"><div class="sw" style="background:#b0124a"></div><span class="n">BOOST</span><span class="v">13.68</span></div><div class="row"><div class="sw" style="background:#14b414"></div><span class="n">map1</span><span class="v">1943</span></div><div class="row hb"><div class="sw" style="background:#0c5a24"></div><span class="n">map1CELL</span><span class="v">2000</span></div></div>
<div class="lg" style="top:501px;height:124px"><div class="row"><div class="sw" style="background:#101010"></div><span class="n">gear</span><span class="v">THIRD</span></div><div class="row"><div class="sw" style="background:#f032d8"></div><span class="n">revLimitActive</span><span class="v">IDLE</span></div><div class="row"><div class="sw" style="background:#900a0a"></div><span class="n">rpm</span><span class="v">4727</span></div><div class="row hb"><div class="sw" style="background:#101010"></div><span class="n">rpmCELL</span><span class="v">4800</span></div></div>
<div class="st" style="left:10px;top:700px;color:#1c7c2c">.\DownloadedData\Customers\General logs\2020-06-22 22-52-41 plus 0h00m00s S7#15020.SD</div>
<div class="st" style="left:10px;top:714px;color:#1c7c2c">S7(15020) Cal(GPro's S7-Plus 6870 1.678.1 - 21-06-20 - Latest V2) Cfg(gpro-syvecs-config-logging) Boot(1.73) Main(1.678.1)</div>
<div class="st" style="left:10px;top:728px;color:#1c7c2c">DateTime(2020\6\22 22:52) UncompressedSize(838 KB)</div>
<div style="position:absolute;left:796px;top:699px;width:13px;height:59px;background:#dce8f9"></div>
<svg class="ov" width="1366" height="768"><path d="M798 709.5L802.5 702L807 709.5Z" fill="#5b8fd6"/><path d="M798 748L802.5 756L807 748Z" fill="#5b8fd6"/><path d="M1182.5 699V758" stroke="#b8b8b8"/></svg>
<div style="position:absolute;left:797px;top:712px;width:11px;height:20px;border:1px solid #6b93cc;background:linear-gradient(#cfe0fa,#a8c6f2)"></div>
<div class="st" style="left:809px;top:700px;font-size:12.23px;color:#e08a30">trqFuelSev (10Hz) samples(4486)</div>
<div class="st" style="left:809px;top:714px;font-size:12.65px;color:#e08a30">Unit(Percent)</div>
<div class="st" style="left:809px;top:728px;font-size:13.05px;color:#e08a30">convert using y=(x/2)+0 to the range 0..100</div>
<div class="st" style="left:809px;top:742px;font-size:12.45px;color:#e08a30">UnitGroup(Cut Severity)</div>
<div class="st" style="left:1190px;top:700px;color:#101010;font-size:12px">Burst Log Mode</div>
<div class="st" style="left:1190px;top:728px;color:#101010;font-size:11.4px">BASE, HIGH LOAD</div>
</body></html>
